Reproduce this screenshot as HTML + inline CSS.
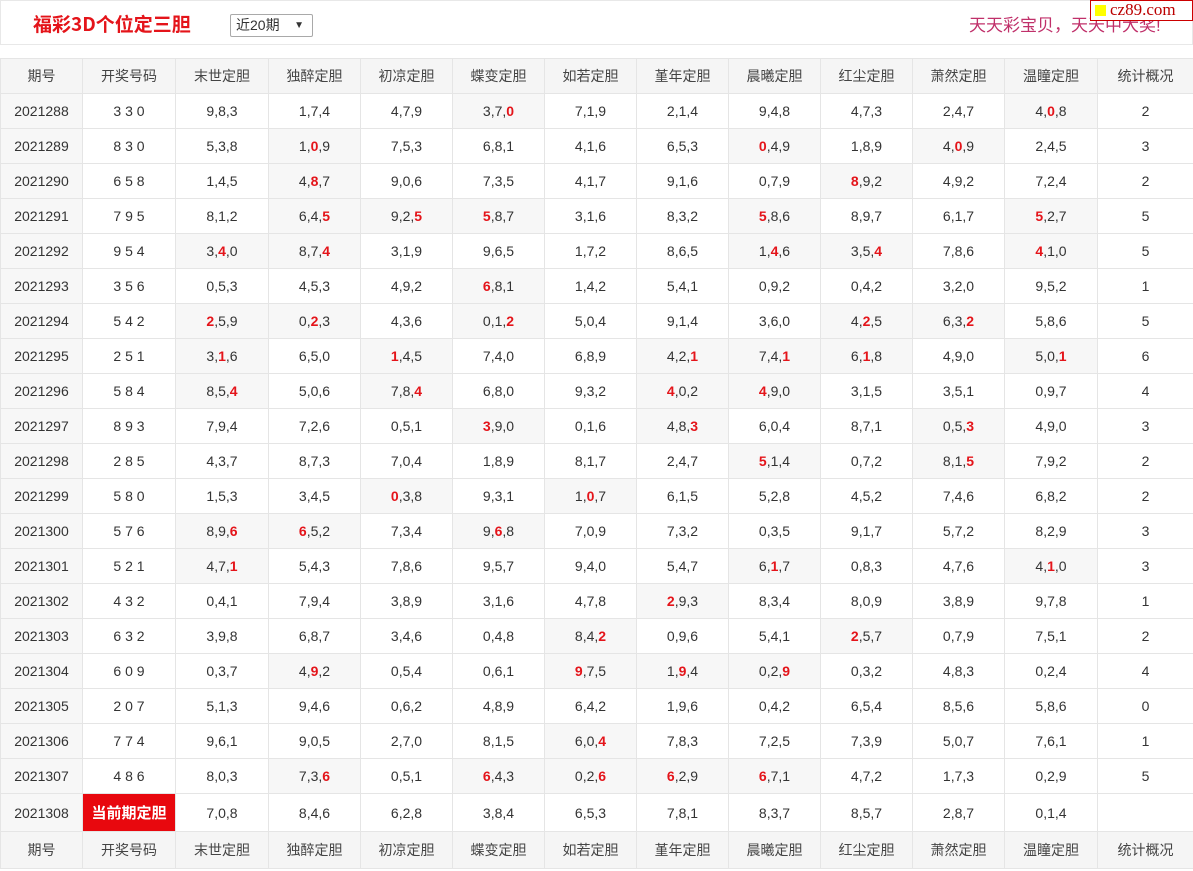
<!DOCTYPE html>
<html><head><meta charset="utf-8">
<style>
*{margin:0;padding:0;box-sizing:border-box}
body{width:1193px;height:871px;background:#fff;font-family:"Liberation Sans","Noto Sans CJK SC",sans-serif;color:#333;overflow:hidden;position:relative}
.top{position:absolute;left:0;top:0;width:1193px;height:45px;border:1px solid #e8e8e8}
.title{position:absolute;left:32px;top:9px;font-size:19px;font-weight:bold;color:#e4141a;font-family:"Noto Sans CJK SC",sans-serif}
.sel{position:absolute;left:229px;top:13px;width:83px;height:23px;border:1px solid #a9a9a9;border-radius:2px;font-size:14px;padding-left:5px;line-height:21px;color:#333}
.sel span{position:absolute;right:8px;top:0;font-size:10px}
.slogan{position:absolute;left:968px;top:10px;font-size:17px;color:#c0306a}
.logo{position:absolute;left:1090px;top:0;width:103px;height:21px;background:#fff;border:1px solid #c00;font-family:"Liberation Serif",serif;font-size:17px;color:#b00;line-height:18px;padding-left:4px}
.logo i{display:inline-block;width:11px;height:11px;background:#ff0;margin-right:4px;vertical-align:-1px}
table{position:absolute;left:0;top:58px;width:1193px;border-collapse:collapse;table-layout:fixed;font-size:14px}
td{border:1px solid #e5e5e5;text-align:center;height:35px;padding:0}
tr.hd td{background:#f5f5f5;color:#444}
td:first-child{background:#f7f7f7}
td.h{background:#f7f7f7}
b{color:#e4141a}
td.cur{background:#e8080e;color:#fff;font-weight:bold;font-size:15px}
tr.last td{height:38px}
tr.ft td{height:37px}
</style></head><body>
<div class="top">
<div class="title">福彩3D个位定三胆</div>
<div class="sel">近20期<span>▼</span></div>
<div class="slogan">天天彩宝贝，天天中大奖!</div>
</div>
<div class="logo"><i></i>cz89.com</div>
<table>
<colgroup><col style="width:82px"><col style="width:93px"><col style="width:93px"><col style="width:92px"><col style="width:92px"><col style="width:92px"><col style="width:92px"><col style="width:92px"><col style="width:92px"><col style="width:92px"><col style="width:92px"><col style="width:93px"><col style="width:96px"></colgroup>
<tr class="hd"><td>期号</td><td>开奖号码</td><td>末世定胆</td><td>独醉定胆</td><td>初凉定胆</td><td>蝶变定胆</td><td>如若定胆</td><td>堇年定胆</td><td>晨曦定胆</td><td>红尘定胆</td><td>萧然定胆</td><td>温瞳定胆</td><td>统计概况</td></tr>
<tr><td>2021288</td><td>3 3 0</td><td>9,8,3</td><td>1,7,4</td><td>4,7,9</td><td class="h">3,7,<b>0</b></td><td>7,1,9</td><td>2,1,4</td><td>9,4,8</td><td>4,7,3</td><td>2,4,7</td><td class="h">4,<b>0</b>,8</td><td>2</td></tr>
<tr><td>2021289</td><td>8 3 0</td><td>5,3,8</td><td class="h">1,<b>0</b>,9</td><td>7,5,3</td><td>6,8,1</td><td>4,1,6</td><td>6,5,3</td><td class="h"><b>0</b>,4,9</td><td>1,8,9</td><td class="h">4,<b>0</b>,9</td><td>2,4,5</td><td>3</td></tr>
<tr><td>2021290</td><td>6 5 8</td><td>1,4,5</td><td class="h">4,<b>8</b>,7</td><td>9,0,6</td><td>7,3,5</td><td>4,1,7</td><td>9,1,6</td><td>0,7,9</td><td class="h"><b>8</b>,9,2</td><td>4,9,2</td><td>7,2,4</td><td>2</td></tr>
<tr><td>2021291</td><td>7 9 5</td><td>8,1,2</td><td class="h">6,4,<b>5</b></td><td class="h">9,2,<b>5</b></td><td class="h"><b>5</b>,8,7</td><td>3,1,6</td><td>8,3,2</td><td class="h"><b>5</b>,8,6</td><td>8,9,7</td><td>6,1,7</td><td class="h"><b>5</b>,2,7</td><td>5</td></tr>
<tr><td>2021292</td><td>9 5 4</td><td class="h">3,<b>4</b>,0</td><td class="h">8,7,<b>4</b></td><td>3,1,9</td><td>9,6,5</td><td>1,7,2</td><td>8,6,5</td><td class="h">1,<b>4</b>,6</td><td class="h">3,5,<b>4</b></td><td>7,8,6</td><td class="h"><b>4</b>,1,0</td><td>5</td></tr>
<tr><td>2021293</td><td>3 5 6</td><td>0,5,3</td><td>4,5,3</td><td>4,9,2</td><td class="h"><b>6</b>,8,1</td><td>1,4,2</td><td>5,4,1</td><td>0,9,2</td><td>0,4,2</td><td>3,2,0</td><td>9,5,2</td><td>1</td></tr>
<tr><td>2021294</td><td>5 4 2</td><td class="h"><b>2</b>,5,9</td><td class="h">0,<b>2</b>,3</td><td>4,3,6</td><td class="h">0,1,<b>2</b></td><td>5,0,4</td><td>9,1,4</td><td>3,6,0</td><td class="h">4,<b>2</b>,5</td><td class="h">6,3,<b>2</b></td><td>5,8,6</td><td>5</td></tr>
<tr><td>2021295</td><td>2 5 1</td><td class="h">3,<b>1</b>,6</td><td>6,5,0</td><td class="h"><b>1</b>,4,5</td><td>7,4,0</td><td>6,8,9</td><td class="h">4,2,<b>1</b></td><td class="h">7,4,<b>1</b></td><td class="h">6,<b>1</b>,8</td><td>4,9,0</td><td class="h">5,0,<b>1</b></td><td>6</td></tr>
<tr><td>2021296</td><td>5 8 4</td><td class="h">8,5,<b>4</b></td><td>5,0,6</td><td class="h">7,8,<b>4</b></td><td>6,8,0</td><td>9,3,2</td><td class="h"><b>4</b>,0,2</td><td class="h"><b>4</b>,9,0</td><td>3,1,5</td><td>3,5,1</td><td>0,9,7</td><td>4</td></tr>
<tr><td>2021297</td><td>8 9 3</td><td>7,9,4</td><td>7,2,6</td><td>0,5,1</td><td class="h"><b>3</b>,9,0</td><td>0,1,6</td><td class="h">4,8,<b>3</b></td><td>6,0,4</td><td>8,7,1</td><td class="h">0,5,<b>3</b></td><td>4,9,0</td><td>3</td></tr>
<tr><td>2021298</td><td>2 8 5</td><td>4,3,7</td><td>8,7,3</td><td>7,0,4</td><td>1,8,9</td><td>8,1,7</td><td>2,4,7</td><td class="h"><b>5</b>,1,4</td><td>0,7,2</td><td class="h">8,1,<b>5</b></td><td>7,9,2</td><td>2</td></tr>
<tr><td>2021299</td><td>5 8 0</td><td>1,5,3</td><td>3,4,5</td><td class="h"><b>0</b>,3,8</td><td>9,3,1</td><td class="h">1,<b>0</b>,7</td><td>6,1,5</td><td>5,2,8</td><td>4,5,2</td><td>7,4,6</td><td>6,8,2</td><td>2</td></tr>
<tr><td>2021300</td><td>5 7 6</td><td class="h">8,9,<b>6</b></td><td class="h"><b>6</b>,5,2</td><td>7,3,4</td><td class="h">9,<b>6</b>,8</td><td>7,0,9</td><td>7,3,2</td><td>0,3,5</td><td>9,1,7</td><td>5,7,2</td><td>8,2,9</td><td>3</td></tr>
<tr><td>2021301</td><td>5 2 1</td><td class="h">4,7,<b>1</b></td><td>5,4,3</td><td>7,8,6</td><td>9,5,7</td><td>9,4,0</td><td>5,4,7</td><td class="h">6,<b>1</b>,7</td><td>0,8,3</td><td>4,7,6</td><td class="h">4,<b>1</b>,0</td><td>3</td></tr>
<tr><td>2021302</td><td>4 3 2</td><td>0,4,1</td><td>7,9,4</td><td>3,8,9</td><td>3,1,6</td><td>4,7,8</td><td class="h"><b>2</b>,9,3</td><td>8,3,4</td><td>8,0,9</td><td>3,8,9</td><td>9,7,8</td><td>1</td></tr>
<tr><td>2021303</td><td>6 3 2</td><td>3,9,8</td><td>6,8,7</td><td>3,4,6</td><td>0,4,8</td><td class="h">8,4,<b>2</b></td><td>0,9,6</td><td>5,4,1</td><td class="h"><b>2</b>,5,7</td><td>0,7,9</td><td>7,5,1</td><td>2</td></tr>
<tr><td>2021304</td><td>6 0 9</td><td>0,3,7</td><td class="h">4,<b>9</b>,2</td><td>0,5,4</td><td>0,6,1</td><td class="h"><b>9</b>,7,5</td><td class="h">1,<b>9</b>,4</td><td class="h">0,2,<b>9</b></td><td>0,3,2</td><td>4,8,3</td><td>0,2,4</td><td>4</td></tr>
<tr><td>2021305</td><td>2 0 7</td><td>5,1,3</td><td>9,4,6</td><td>0,6,2</td><td>4,8,9</td><td>6,4,2</td><td>1,9,6</td><td>0,4,2</td><td>6,5,4</td><td>8,5,6</td><td>5,8,6</td><td>0</td></tr>
<tr><td>2021306</td><td>7 7 4</td><td>9,6,1</td><td>9,0,5</td><td>2,7,0</td><td>8,1,5</td><td class="h">6,0,<b>4</b></td><td>7,8,3</td><td>7,2,5</td><td>7,3,9</td><td>5,0,7</td><td>7,6,1</td><td>1</td></tr>
<tr><td>2021307</td><td>4 8 6</td><td>8,0,3</td><td class="h">7,3,<b>6</b></td><td>0,5,1</td><td class="h"><b>6</b>,4,3</td><td class="h">0,2,<b>6</b></td><td class="h"><b>6</b>,2,9</td><td class="h"><b>6</b>,7,1</td><td>4,7,2</td><td>1,7,3</td><td>0,2,9</td><td>5</td></tr>
<tr class="last"><td>2021308</td><td class="cur">当前期定胆</td><td>7,0,8</td><td>8,4,6</td><td>6,2,8</td><td>3,8,4</td><td>6,5,3</td><td>7,8,1</td><td>8,3,7</td><td>8,5,7</td><td>2,8,7</td><td>0,1,4</td><td></td></tr>
<tr class="hd ft"><td>期号</td><td>开奖号码</td><td>末世定胆</td><td>独醉定胆</td><td>初凉定胆</td><td>蝶变定胆</td><td>如若定胆</td><td>堇年定胆</td><td>晨曦定胆</td><td>红尘定胆</td><td>萧然定胆</td><td>温瞳定胆</td><td>统计概况</td></tr>
</table>
</body></html>
